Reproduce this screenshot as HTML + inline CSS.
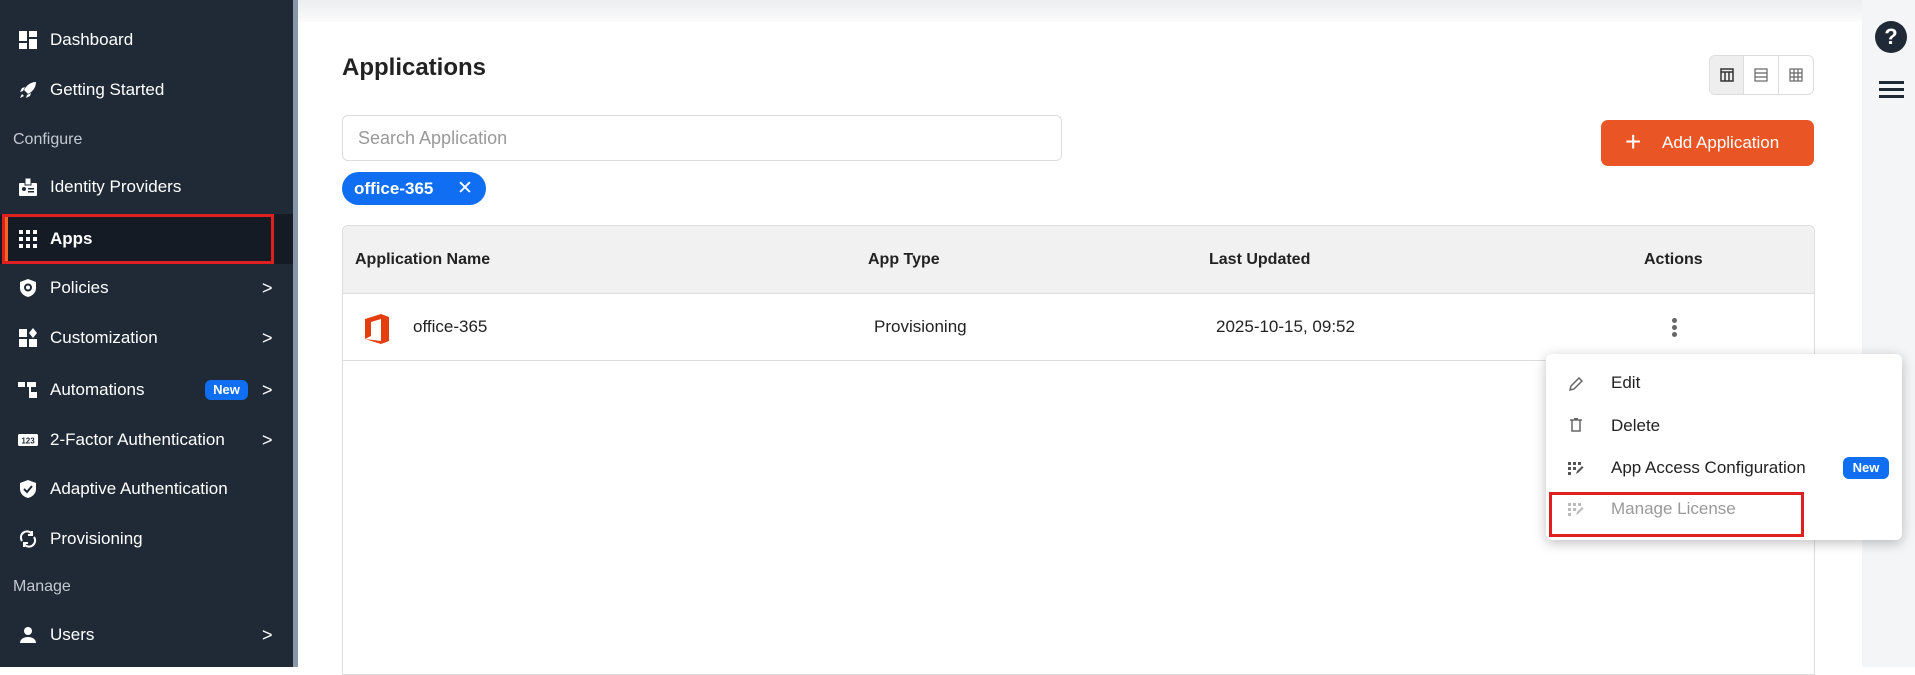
<!DOCTYPE html>
<html><head><meta charset="utf-8"><style>
*{box-sizing:border-box;margin:0;padding:0}
body{width:1915px;height:667px;overflow:hidden;font-family:"Liberation Sans",sans-serif;background:#fff;position:relative}
.abs{position:absolute}
#sb{left:0;top:0;width:293px;height:667px;background:#1f2a36}
#sbedge{left:293px;top:0;width:5px;height:667px;background:#8796a8}
.it{position:absolute;left:0;width:293px;height:40px;color:#fff;font-size:17px;display:flex;align-items:center}
.it .ic{position:absolute;left:18px;width:20px;height:20px;top:10px}
.it .tx{position:absolute;left:50px}
.it .ch{position:absolute;left:262px;font-size:18px}
.sec{position:absolute;left:13px;color:#c3c9d0;font-size:16px}
.hdr{position:absolute;top:0;left:298px;width:1564px;height:22px;background:linear-gradient(#eceeef,#fbfbfb)}
#rs{left:1862px;top:0;width:53px;height:667px;background:#f3f5f7}
.menu div{position:absolute;font-size:17px;color:#222}
</style></head><body>
<div id="sb" class="abs"></div><div id="sbedge" class="abs"></div>
<div class="it" style="top:20px"><svg class="ic" viewBox="0 0 20 20"><rect x="1" y="1" width="8" height="10" fill="#fff"/><rect x="11" y="1" width="8" height="6" fill="#fff"/><rect x="1" y="13" width="8" height="6" fill="#fff"/><rect x="11" y="9" width="8" height="10" fill="#fff"/></svg><span class="tx">Dashboard</span></div>
<div class="it" style="top:70px"><svg class="ic" viewBox="0 0 20 20"><path d="M18 2C12 2 8 6 6 10l4 4c4-2 8-6 8-12zM5 11l-3 1 2-4 3-1zM9 15l-1 3 4-2 1-3zM4 14l-2 4 4-2z" fill="#fff"/></svg><span class="tx">Getting Started</span></div>
<div class="sec" style="top:131px">Configure</div>
<div class="it" style="top:167px"><svg class="ic" viewBox="0 0 20 20"><rect x="1" y="6" width="18" height="13" rx="1" fill="#fff"/><rect x="7" y="1" width="6" height="7" fill="#fff" stroke="#1f2a36"/><circle cx="6" cy="12" r="2" fill="#1f2a36"/><rect x="10" y="11" width="6" height="1.5" fill="#1f2a36"/><rect x="10" y="14" width="6" height="1.5" fill="#1f2a36"/></svg><span class="tx">Identity Providers</span></div>
<div class="abs" style="left:0;top:214px;width:293px;height:50px;background:#141b24"></div>
<div class="abs" style="left:2px;top:214px;width:272px;height:50px;border:3px solid #e02020"></div>
<div class="abs" style="left:5px;top:217px;width:3px;height:44px;background:#f26522"></div>
<div class="it" style="top:219px"><svg class="ic" viewBox="0 0 20 20" fill="#fff"><rect x="1" y="1" width="4" height="4"/><rect x="8" y="1" width="4" height="4"/><rect x="15" y="1" width="4" height="4"/><rect x="1" y="8" width="4" height="4"/><rect x="8" y="8" width="4" height="4"/><rect x="15" y="8" width="4" height="4"/><rect x="1" y="15" width="4" height="4"/><rect x="8" y="15" width="4" height="4"/><rect x="15" y="15" width="4" height="4"/></svg><span class="tx" style="font-weight:bold">Apps</span></div>
<div class="it" style="top:268px"><svg class="ic" viewBox="0 0 20 20"><path d="M10 1l8 3v6c0 5-4 8-8 9-4-1-8-4-8-9V4z" fill="#fff"/><circle cx="10" cy="9.5" r="3" fill="none" stroke="#1f2a36" stroke-width="2"/></svg><span class="tx">Policies</span><span class="ch">&gt;</span></div>
<div class="it" style="top:318px"><svg class="ic" viewBox="0 0 20 20" fill="#fff"><rect x="1" y="1" width="8" height="8"/><rect x="1" y="11" width="8" height="8"/><rect x="11" y="11" width="8" height="8"/><path d="M15 0l4 5-4 5-4-5z"/></svg><span class="tx">Customization</span><span class="ch">&gt;</span></div>
<div class="it" style="top:370px"><svg class="ic" viewBox="0 0 20 20" fill="#fff"><rect x="0" y="2" width="7" height="5"/><rect x="9" y="2" width="9" height="5"/><rect x="11" y="12" width="8" height="6"/><rect x="11" y="6" width="2" height="8"/></svg><span class="tx">Automations</span><span class="abs" style="left:205px;top:10px;width:43px;height:20px;background:#0f6ef2;border-radius:6px;font-size:13px;font-weight:bold;text-align:center;line-height:20px">New</span><span class="ch">&gt;</span></div>
<div class="it" style="top:420px"><svg class="ic" viewBox="0 0 20 20"><rect x="0" y="4" width="20" height="12" rx="1.5" fill="#fff"/><text x="10" y="13.5" font-size="8" font-weight="bold" text-anchor="middle" fill="#1f2a36" font-family="Liberation Sans">123</text></svg><span class="tx">2-Factor Authentication</span><span class="ch">&gt;</span></div>
<div class="it" style="top:469px"><svg class="ic" viewBox="0 0 20 20"><path d="M10 1l8 3v6c0 5-4 8-8 9-4-1-8-4-8-9V4z" fill="#fff"/><path d="M6 10l3 3 5-6" fill="none" stroke="#1f2a36" stroke-width="2"/></svg><span class="tx">Adaptive Authentication</span></div>
<div class="it" style="top:519px"><svg class="ic" viewBox="0 0 20 20" fill="none" stroke="#fff" stroke-width="2"><path d="M4 12a6 6 0 0 1 10-7M16 8a6 6 0 0 1-10 7"/><path d="M14 2v4h-4M6 18v-4h4"/></svg><span class="tx">Provisioning</span></div>
<div class="sec" style="top:578px">Manage</div>
<div class="it" style="top:615px"><svg class="ic" viewBox="0 0 20 20" fill="#fff"><circle cx="10" cy="6" r="4"/><path d="M2 18c0-4 4-6 8-6s8 2 8 6z"/></svg><span class="tx">Users</span><span class="ch">&gt;</span></div>

<div class="hdr"></div>
<div id="rs" class="abs"></div>
<div class="abs" style="left:1875px;top:21px;width:32px;height:32px;border-radius:50%;background:#1f2a36;color:#fff;font-weight:bold;font-size:22px;text-align:center;line-height:32px">?</div>
<div class="abs" style="left:1879px;top:81px;width:25px;height:3px;background:#1f2a36;box-shadow:0 7px 0 #1f2a36,0 14px 0 #1f2a36"></div>

<div class="abs" style="left:342px;top:54px;font-size:24px;font-weight:bold;color:#222">Applications</div>
<div class="abs" style="left:1709px;top:55px;width:105px;height:40px;border:1px solid #ddd;border-radius:6px;display:flex;overflow:hidden">
<div style="width:35px;background:#eee;border-right:1px solid #ddd;display:flex;align-items:center;justify-content:center"><svg width="14" height="14" viewBox="0 0 14 14" fill="none" stroke="#333" stroke-width="1.5"><rect x="1" y="1" width="12" height="12"/><path d="M1 4h12M5 4v9M9 4v9"/></svg></div>
<div style="width:35px;border-right:1px solid #ddd;display:flex;align-items:center;justify-content:center"><svg width="14" height="14" viewBox="0 0 14 14" fill="none" stroke="#666" stroke-width="1.2"><rect x="1" y="1" width="12" height="12"/><path d="M1 5h12M1 9h12"/></svg></div>
<div style="width:35px;display:flex;align-items:center;justify-content:center"><svg width="14" height="14" viewBox="0 0 14 14" fill="none" stroke="#666" stroke-width="1.2"><rect x="1" y="1" width="12" height="12"/><path d="M1 5h12M1 9h12M5 1v12M9 1v12"/></svg></div>
</div>
<div class="abs" style="left:342px;top:115px;width:720px;height:46px;border:1px solid #ddd;border-radius:6px;padding-left:15px;line-height:44px;font-size:18px;color:#999">Search Application</div>
<div class="abs" style="left:1601px;top:120px;width:213px;height:46px;background:#e95524;border-radius:7px;color:#fff;font-size:17px;line-height:46px"><span style="position:absolute;left:24px;font-size:28px;top:-1px;font-weight:300">+</span><span style="position:absolute;left:61px">Add Application</span></div>
<div class="abs" style="left:342px;top:172px;width:144px;height:33px;background:#0f6ef2;border-radius:17px;color:#fff;font-size:17px;font-weight:bold;line-height:33px;padding-left:12px">office-365<span style="position:absolute;left:115px;font-weight:normal;font-size:19px">✕</span></div>

<div class="abs" style="left:342px;top:225px;width:1473px;height:450px;border:1px solid #ddd;border-radius:6px 6px 0 0"></div>
<div class="abs" style="left:343px;top:226px;width:1471px;height:68px;background:#f1f1f1;border-bottom:1px solid #ddd;border-radius:6px 6px 0 0"></div>
<div class="abs" style="top:251px;left:355px;font-size:16px;font-weight:bold;color:#222">Application Name</div>
<div class="abs" style="top:251px;left:868px;font-size:16px;font-weight:bold;color:#222">App Type</div>
<div class="abs" style="top:251px;left:1209px;font-size:16px;font-weight:bold;color:#222">Last Updated</div>
<div class="abs" style="top:251px;left:1644px;font-size:16px;font-weight:bold;color:#222">Actions</div>
<div class="abs" style="left:343px;top:360px;width:1471px;height:1px;background:#ddd"></div>
<svg class="abs" style="left:363px;top:313px" width="28" height="32" viewBox="0 0 28 32"><path d="M2 6L18 1l8 3v24l-8 3-16-5 16 2V6L8 9v14l-6 3z" fill="#e43e0f"/></svg>
<div class="abs" style="top:317px;left:413px;font-size:17px;color:#222">office-365</div>
<div class="abs" style="top:317px;left:874px;font-size:17px;color:#222">Provisioning</div>
<div class="abs" style="top:317px;left:1216px;font-size:17px;color:#222">2025-10-15, 09:52</div>
<div class="abs" style="left:1672px;top:318px;width:5px;height:5px;border-radius:50%;background:#666;box-shadow:0 7px 0 #666,0 14px 0 #666"></div>

<div class="abs menu" style="left:1546px;top:354px;width:356px;height:186px;background:#fff;border-radius:6px;box-shadow:0 3px 12px rgba(0,0,0,.25)">
<svg class="abs" style="left:22px;top:22px" width="16" height="16" viewBox="0 0 16 16" fill="none" stroke="#666" stroke-width="1.5"><path d="M2 14l1-4 8-8 3 3-8 8z"/></svg>
<div style="left:65px;top:19px">Edit</div>
<svg class="abs" style="left:24px;top:64px" width="12" height="14" viewBox="0 0 12 14" fill="none" stroke="#666" stroke-width="1.5"><path d="M0 2h12M2 2v11h8V2M4 0.8h4"/></svg>
<div style="left:65px;top:62px">Delete</div>
<svg class="abs" style="left:22px;top:107px" width="16" height="14" viewBox="0 0 16 14" fill="#555"><rect x="0" y="1" width="3" height="3"/><rect x="5" y="1" width="3" height="3"/><rect x="10" y="1" width="3" height="3"/><rect x="0" y="6" width="3" height="3"/><rect x="5" y="6" width="3" height="3"/><rect x="0" y="11" width="3" height="3"/><path d="M8 13l1-3 5-5 1.5 1.5-5 5z"/></svg>
<div style="left:65px;top:104px">App Access Configuration</div>
<div style="left:297px;top:103px;width:46px;height:22px;background:#0f6ef2;border-radius:6px;color:#fff;font-size:13px;font-weight:bold;text-align:center;line-height:22px">New</div>
<svg class="abs" style="left:22px;top:148px" width="16" height="14" viewBox="0 0 16 14" fill="#bbb"><rect x="0" y="1" width="3" height="3"/><rect x="5" y="1" width="3" height="3"/><rect x="10" y="1" width="3" height="3"/><rect x="0" y="6" width="3" height="3"/><rect x="5" y="6" width="3" height="3"/><rect x="0" y="11" width="3" height="3"/><path d="M8 13l1-3 5-5 1.5 1.5-5 5z"/></svg>
<div style="left:65px;top:145px;color:#999">Manage License</div>
<div style="left:3px;top:138px;width:255px;height:45px;border:3px solid #e02020"></div>
</div>
</body></html>
